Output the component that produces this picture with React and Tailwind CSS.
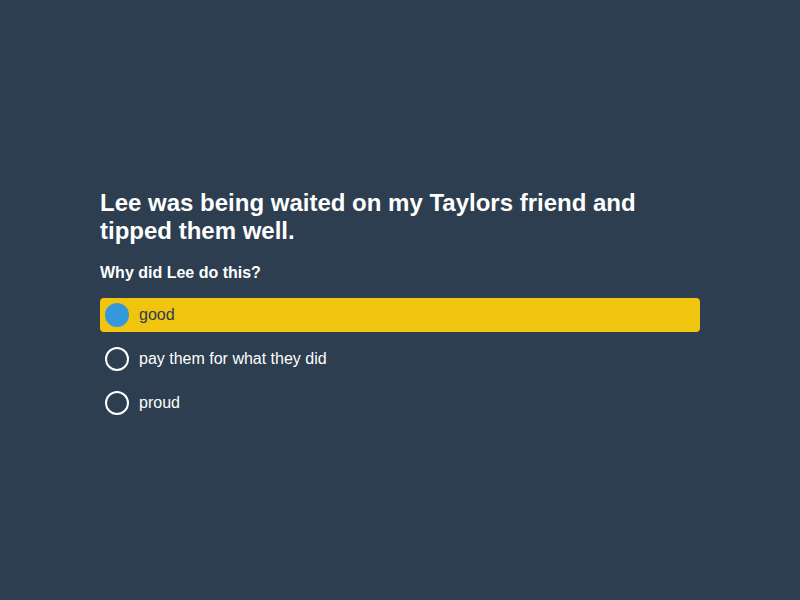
export default function App() {
  const options = ["good", "pay them for what they did", "proud"];
  return (
    <div className="w-[800px] h-[600px] bg-[#2c3e50] flex items-center justify-center pt-[8px]" style={{ fontFamily: '"Liberation Sans", Arial, sans-serif' }}>
      <div className="w-[600px]">
        <h1 className="text-[24px] leading-[28px] font-bold text-white">
          Lee was being waited on my Taylors friend and tipped them well.
        </h1>
        <h2 className="mt-[19px] text-[16px] leading-[18px] font-bold text-white">Why did Lee do this?</h2>
        <div className="mt-[16px] flex flex-col gap-[10px]">
          {options.map((o, i) => (
            <div
              key={o}
              className={
                i === 0
                  ? "h-[34px] flex items-center px-[5px] rounded-[4px] bg-[#f1c40f] text-[#2c3e50]"
                  : "h-[34px] flex items-center px-[5px] rounded-[4px] text-white"
              }
            >
              {i === 0 ? (
                <span className="w-[24px] h-[24px] rounded-full bg-[#3498db]" />
              ) : (
                <span className="w-[24px] h-[24px] rounded-full border-2 border-white" />
              )}
              <span className="ml-[10px] text-[16px]">{o}</span>
            </div>
          ))}
        </div>
      </div>
    </div>
  );
}
